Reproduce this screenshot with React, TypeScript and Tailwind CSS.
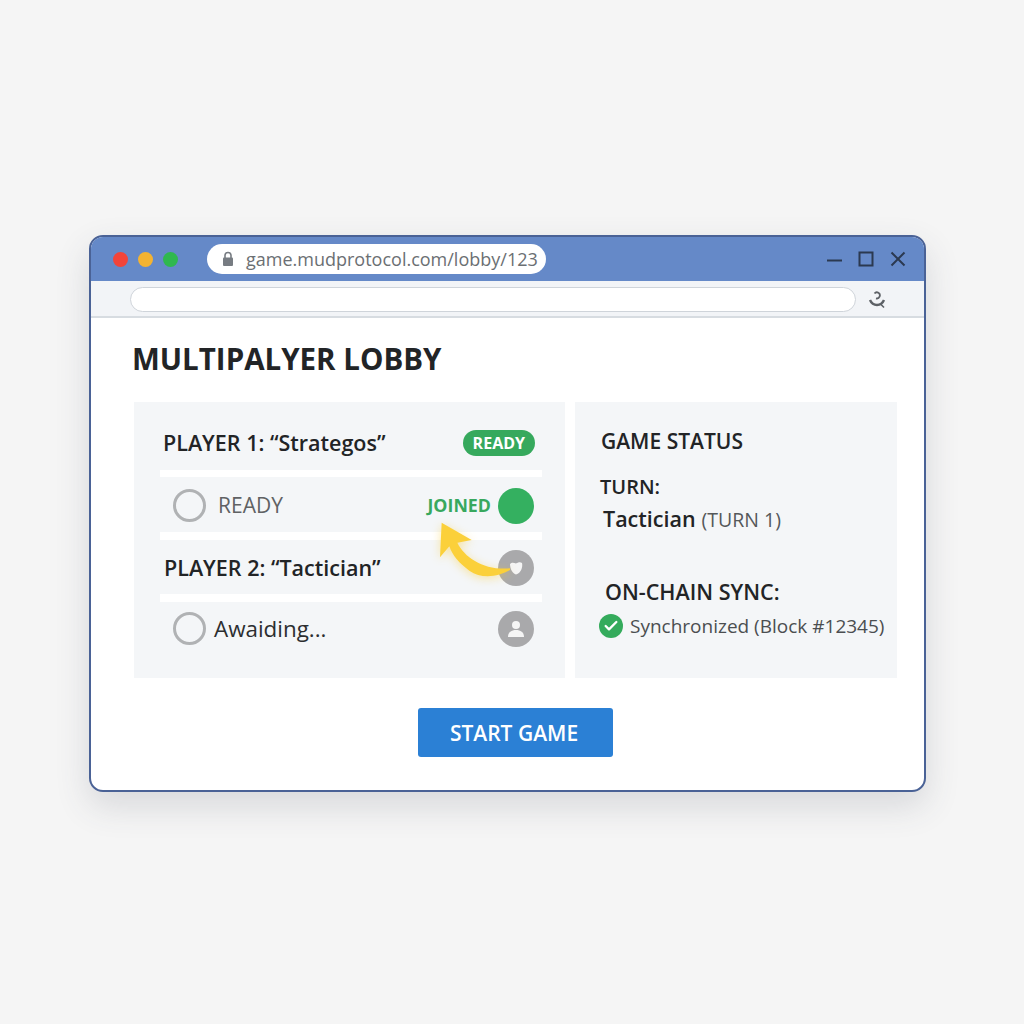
import { Check } from "lucide-react";

function Radio() {
  return <div className="w-[33px] h-[33px] rounded-full border-[3px] border-[#b0b2b4] shrink-0" />;
}

export default function App() {
  return (
    <div className="min-h-screen bg-[#f5f5f5] pt-[235px] pl-[89px] font-['Open_Sans',sans-serif] text-[#222426]">
      <div className="w-[837px] h-[557px] rounded-[14px] border-2 border-[#4a6296] bg-white overflow-hidden shadow-[0_14px_34px_rgba(60,70,90,0.16)]">
        {/* Title bar */}
        <div className="h-[44px] bg-[#6589c8] flex items-center pl-[22px] pr-[18px]">
          <div className="flex gap-[10px]">
            <div className="w-[15px] h-[15px] rounded-full bg-[#f2443a]" />
            <div className="w-[15px] h-[15px] rounded-full bg-[#f4b331]" />
            <div className="w-[15px] h-[15px] rounded-full bg-[#2fb84f]" />
          </div>
          <div className="ml-[29px] w-[339px] h-[30px] rounded-full bg-white flex items-center pl-[15px]">
            <svg width="12" height="16" viewBox="0 0 12 16" className="shrink-0">
              <path d="M3 7V4.500a3 3 0 0 1 6 0V7" fill="none" stroke="#777c82" strokeWidth="1.6" />
              <rect x="1" y="6.500" width="10" height="8.500" rx="1" fill="#777c82" />
            </svg>
            <span className="ml-[12px] text-[18px] text-[#6b6f73] whitespace-nowrap">game.mudprotocol.com/lobby/123</span>
          </div>
          <div className="ml-auto flex items-center gap-[16px] text-[#2b3950]">
            <svg width="16" height="16" viewBox="0 0 16 16"><path d="M1 9.500h15" stroke="currentColor" strokeWidth="2" /></svg>
            <svg width="16" height="16" viewBox="0 0 16 16"><rect x="1.500" y="1.500" width="13" height="13" fill="none" stroke="currentColor" strokeWidth="2" /></svg>
            <svg width="16" height="16" viewBox="0 0 16 16"><path d="M1.500 1.500l13 13M14.500 1.500l-13 13" stroke="currentColor" strokeWidth="2" /></svg>
          </div>
        </div>

        {/* Toolbar */}
        <div className="h-[37px] bg-[#f2f4f7] border-b-2 border-[#d7dce1] flex items-center pt-[2px] pl-[39px] pr-[38px]">
          <div className="w-[726px] h-[25px] rounded-full bg-white border border-[#cfd4da]" />
          <svg width="18" height="18" viewBox="0 0 18 18" className="ml-auto">
            <path d="M6.500 2.500a3 3 0 1 1 1.500 4.800" fill="none" stroke="#5d6166" strokeWidth="1.800" />
            <path d="M2 9c1.500 3.500 4 5 7 5s5.500-1.500 7-5" fill="none" stroke="#5d6166" strokeWidth="2.400" />
            <path d="M12.500 13l3.500 3.500" stroke="#5d6166" strokeWidth="1.600" />
          </svg>
        </div>

        {/* Content */}
        <div className="pl-[43px] pr-[27px]">
          <h1 className="h-[84px] -ml-[2px] pb-[2px] flex items-center text-[29.5px] font-bold text-[#222426] whitespace-nowrap">MULTIPALYER LOBBY</h1>

          <div className="flex gap-[10px]">
            {/* Players */}
            <div className="relative w-[431px] h-[276px] bg-[#f4f6f8] pl-[26px] pr-[23px]">
              <div className="h-[75px] pt-[14px] pl-[3px] pr-[7px] flex items-center justify-between border-b-[7px] border-white">
                <span className="text-[21.500px] font-semibold whitespace-nowrap">PLAYER 1: “Strategos”</span>
                <span className="h-[26px] px-[10px] rounded-full bg-[#36a95d] text-white text-[16px] font-bold flex items-center">READY</span>
              </div>
              <div className="h-[63px] pt-[2px] pl-[13px] pr-[8px] flex items-center border-b-[8px] border-white">
                <Radio />
                <span className="ml-[12px] text-[21px] text-[#606264]">READY</span>
                <span className="ml-auto text-[17.800px] font-bold text-[#38a85e]">JOINED</span>
                <div className="ml-[7px] w-[36px] h-[36px] rounded-full bg-[#34b060]" />
              </div>
              <div className="h-[62px] pt-[2px] pl-[4px] pr-[8px] flex items-center justify-between border-b-[8px] border-white">
                <span className="text-[21.500px] font-semibold whitespace-nowrap">PLAYER 2: “Tactician”</span>
                <div className="w-[36px] h-[36px] rounded-full bg-[#a9a9ab] flex items-center justify-center">
                  <svg width="14" height="14" viewBox="0 0 14 14">
                    <path d="M1 3C3 1 5 2 7 2.500C9 1.500 11 .5 13 2C14 6 12 12 7 13.500C4 13 1 8 1 3z" fill="#f5f5f5" />
                  </svg>
                </div>
              </div>
              <div className="h-[54px] pl-[13px] pr-[8px] flex items-center justify-between">
                <div className="flex items-center">
                  <Radio />
                  <span className="ml-[8px] text-[22.400px] text-[#2c2e30]">Awaiding...</span>
                </div>
                <div className="w-[36px] h-[36px] rounded-full bg-[#a9a9ab] flex items-center justify-center">
                  <svg width="24" height="24" viewBox="0 0 24 24">
                    <circle cx="12" cy="8" r="4" fill="#f5f5f5" />
                    <path d="M4 20c0-5 3.500-7 8-7s8 2 8 7z" fill="#f5f5f5" />
                  </svg>
                </div>
              </div>

              {/* Arrow from player 2 to JOINED */}
              <svg width="150" height="170" viewBox="0 0 450 510" className="absolute left-[266px] top-[78px] drop-shadow-[0_2px_5px_rgba(250,205,50,0.45)]">
                <path d="M125 128L215 180L172 188C195 235 255 272 330 265L330 270C295 290 245 298 208 272C178 250 158 228 148 199L120 232Z" fill="#fbd03a" />
              </svg>
            </div>

            {/* Status */}
            <div className="w-[322px] h-[276px] bg-[#f4f6f8] pt-[26px] pl-[24px]">
              <div className="pl-[2px] text-[21px] font-semibold leading-[27px]">GAME STATUS</div>
              <div className="mt-[18px] pl-[1px] text-[20px] font-semibold leading-[27px]">TURN:</div>
              <div className="mt-[4px] pl-[4px] flex items-baseline leading-[30px]">
                <span className="text-[21.500px] font-semibold">Tactician</span>
                <span className="ml-[6px] text-[19.500px] text-[#55585a]">(TURN 1)</span>
              </div>
              <div className="mt-[43px] pl-[6px] text-[21.500px] font-semibold leading-[27px]">ON-CHAIN SYNC:</div>
              <div className="mt-[7px] flex items-center">
                <div className="w-[24px] h-[24px] rounded-full bg-[#34ab5c] flex items-center justify-center">
                  <Check size={16} strokeWidth={3.5} color="#ffffff" />
                </div>
                <span className="ml-[7px] text-[19px] text-[#4b4e50] whitespace-nowrap">Synchronized (Block #12345)</span>
              </div>
            </div>
          </div>

          <div className="mt-[30px] flex justify-center">
            <button className="w-[195px] h-[49px] pt-[2px] pr-[3px] rounded-[3px] bg-[#2b80d5] text-white text-[21px] font-semibold">START GAME</button>
          </div>
        </div>
      </div>
    </div>
  );
}
